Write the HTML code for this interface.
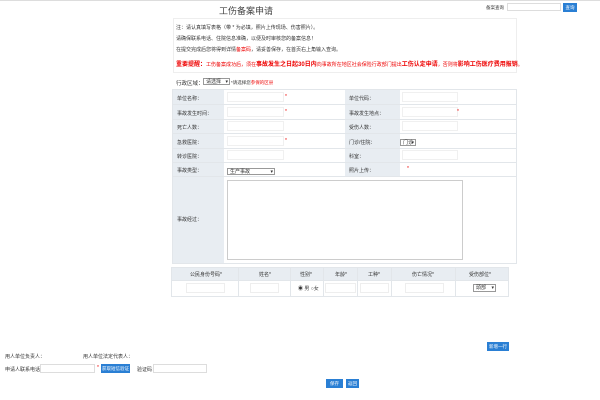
<!DOCTYPE html>
<html><head><meta charset="utf-8"><style>
*{margin:0;padding:0;box-sizing:border-box}
body{width:600px;height:400px;background:#fff;font-family:"Liberation Sans","Noto Sans CJK SC",sans-serif;font-size:5px;color:#333;position:relative;overflow:hidden}
.a{position:absolute;white-space:nowrap}
.in{position:absolute;border:1px solid #ddd;background:#fff}
.btn{position:absolute;background:#2a7fd4;color:#fff;font-size:4.5px;text-align:center;line-height:9px}
.red{color:#e00}
.lab{position:absolute;background:#e8edf2;}
.sel{position:absolute;border:1px solid #999;background:#fff;font-size:5px;line-height:6px;padding-left:2px}
.sel:after{content:"▾";position:absolute;right:1px;top:0;font-size:5px}
</style></head><body>
<div style="position:absolute;left:0;top:0;width:600px;height:1px;background:#ddd"></div>
<div class="a" style="left:219px;top:4px;font-size:9px;color:#444">工伤备案申请</div>
<div class="a" style="left:486px;top:5px;font-size:4.5px">备案查询</div>
<div class="in" style="left:507px;top:3px;width:54px;height:8px"></div>
<div class="btn" style="left:563px;top:3px;width:14px;height:9px;line-height:9px">查询</div>

<div style="position:absolute;left:173px;top:18px;width:344px;height:55px;border:1px solid #eee"></div>
<div class="a" style="left:176px;top:24px">注：请认真填写表格（带 * 为必填，照片上传现场、伤害照片）。</div>
<div class="a" style="left:176px;top:35px">请确保联系电话、住院信息准确，以便及时审核您的备案信息！</div>
<div class="a" style="left:176px;top:46px">在提交完成后您将得到详情<span class="red">备案码</span>，请妥善保存，在首页右上角输入查询。</div>
<div class="a red" style="left:176px;top:59px;font-size:5px"><b style="font-size:6px">重要提醒：</b>工伤备案成功后，须在<b style="font-size:6px">事故发生之日起30日内</b>向事故所在地区社会保险行政部门提出<b style="font-size:6px">工伤认定申请</b>，否则将<b style="font-size:6px">影响工伤医疗费用报销</b>。</div>

<div class="a" style="left:176px;top:79px;font-size:5.5px">行政区域：</div>
<div class="sel" style="left:203px;top:78px;width:27px;height:7px">请选择</div>
<div class="a" style="left:231px;top:80px;font-size:4.5px">*请选择您<span class="red">参保的区县</span></div>

<div style="position:absolute;left:172px;top:89px;width:345px;height:175px;border:1px solid #e2e6ea;background:#fff"></div>
<div class="lab" style="left:173px;top:90px;width:51px;height:173px"></div>
<div class="lab" style="left:345px;top:90px;width:55px;height:86px"></div>
<div id="rows"></div>
<div style="position:absolute;left:173px;top:104px;width:343px;height:1px;background:#e2e6ea"></div>
<div style="position:absolute;left:173px;top:119px;width:343px;height:1px;background:#e2e6ea"></div>
<div style="position:absolute;left:173px;top:133px;width:343px;height:1px;background:#e2e6ea"></div>
<div style="position:absolute;left:173px;top:148px;width:343px;height:1px;background:#e2e6ea"></div>
<div style="position:absolute;left:173px;top:162px;width:343px;height:1px;background:#e2e6ea"></div>
<div style="position:absolute;left:173px;top:176px;width:343px;height:1px;background:#e2e6ea"></div>

<div class="a" style="left:177px;top:95px">单位名称：</div>
<div class="a" style="left:177px;top:110px">事故发生时间：</div>
<div class="a" style="left:177px;top:124px">死亡人数：</div>
<div class="a" style="left:177px;top:139px">急救医院：</div>
<div class="a" style="left:177px;top:153px">转诊医院：</div>
<div class="a" style="left:177px;top:167px">事故类型：</div>
<div class="a" style="left:177px;top:216px">事故经过：</div>
<div class="a" style="left:349px;top:95px">单位代码：</div>
<div class="a" style="left:349px;top:110px">事故发生地点：</div>
<div class="a" style="left:349px;top:124px">受伤人数：</div>
<div class="a" style="left:349px;top:139px">门诊/住院：</div>
<div class="a" style="left:349px;top:153px">科室：</div>
<div class="a" style="left:349px;top:167px">照片上传：</div>

<div class="in" style="left:227px;top:92px;width:57px;height:10px;border-color:#f0f0f0"></div>
<div class="in" style="left:227px;top:107px;width:57px;height:10px;border-color:#f0f0f0"></div>
<div class="in" style="left:227px;top:121px;width:57px;height:10px;border-color:#f0f0f0"></div>
<div class="in" style="left:227px;top:136px;width:57px;height:10px;border-color:#f0f0f0"></div>
<div class="in" style="left:227px;top:150px;width:57px;height:10px;border-color:#f0f0f0"></div>
<div class="a red" style="left:285px;top:94px">*</div>
<div class="a red" style="left:285px;top:109px">*</div>
<div class="a red" style="left:285px;top:138px">*</div>
<div class="sel" style="left:227px;top:168px;width:48px;height:7px">生产事故</div>
<div class="in" style="left:227px;top:180px;width:236px;height:80px;border-color:#ccc"></div>

<div class="in" style="left:402px;top:92px;width:56px;height:10px;border-color:#f0f0f0"></div>
<div class="in" style="left:402px;top:107px;width:56px;height:10px;border-color:#f0f0f0"></div>
<div class="in" style="left:402px;top:121px;width:56px;height:10px;border-color:#f0f0f0"></div>
<div class="in" style="left:402px;top:150px;width:56px;height:10px;border-color:#f0f0f0"></div>
<div class="a red" style="left:457px;top:109px">*</div>
<div class="a red" style="left:407px;top:166px">*</div>
<div class="sel" style="left:400px;top:139px;width:16px;height:7px">门诊</div>

<div style="position:absolute;left:171px;top:267px;width:338px;height:30px;border:1px solid #e2e6ea"></div>
<div style="position:absolute;left:172px;top:268px;width:336px;height:12px;background:#e8edf2"></div>
<div style="position:absolute;left:172px;top:280px;width:336px;height:1px;background:#e2e6ea"></div>
<div style="position:absolute;left:238px;top:268px;width:1px;height:28px;background:#e2e6ea"></div>
<div style="position:absolute;left:290px;top:268px;width:1px;height:28px;background:#e2e6ea"></div>
<div style="position:absolute;left:323px;top:268px;width:1px;height:28px;background:#e2e6ea"></div>
<div style="position:absolute;left:357px;top:268px;width:1px;height:28px;background:#e2e6ea"></div>
<div style="position:absolute;left:391px;top:268px;width:1px;height:28px;background:#e2e6ea"></div>
<div style="position:absolute;left:455px;top:268px;width:1px;height:28px;background:#e2e6ea"></div>
<div class="a" style="left:190px;top:271px">公民身份号码*</div>
<div class="a" style="left:259px;top:271px">姓名*</div>
<div class="a" style="left:300px;top:271px">性别*</div>
<div class="a" style="left:335px;top:271px">年龄*</div>
<div class="a" style="left:368px;top:271px">工种*</div>
<div class="a" style="left:412px;top:271px">伤亡情况*</div>
<div class="a" style="left:469px;top:271px">受伤部位*</div>
<div class="in" style="left:186px;top:283px;width:39px;height:10px;border-color:#eee"></div>
<div class="in" style="left:250px;top:283px;width:29px;height:10px;border-color:#eee"></div>
<div class="a" style="left:298px;top:285px">◉ 男 ○女</div>
<div class="in" style="left:325px;top:283px;width:31px;height:10px;border-color:#eee"></div>
<div class="in" style="left:360px;top:283px;width:29px;height:10px;border-color:#eee"></div>
<div class="in" style="left:405px;top:283px;width:39px;height:10px;border-color:#eee"></div>
<div class="sel" style="left:473px;top:284px;width:23px;height:8px">頭部</div>

<div class="btn" style="left:487px;top:342px;width:22px;height:9px">新增一行</div>
<div class="a" style="left:5px;top:353px">用人单位负责人：</div>
<div class="a" style="left:83px;top:353px">用人单位法定代表人：</div>
<div class="a" style="left:5px;top:366px">申请人联系电话：</div>
<div class="in" style="left:40px;top:364px;width:55px;height:9px"></div>
<div class="a red" style="left:97px;top:365px">*</div>
<div class="btn" style="left:101px;top:364px;width:29px;height:9px">获取短信验证</div>
<div class="a" style="left:137px;top:366px">验证码：</div>
<div class="in" style="left:153px;top:364px;width:54px;height:9px"></div>
<div class="btn" style="left:326px;top:379px;width:17px;height:9px">保存</div>
<div class="btn" style="left:346px;top:379px;width:13px;height:9px">返回</div>
</body></html>
